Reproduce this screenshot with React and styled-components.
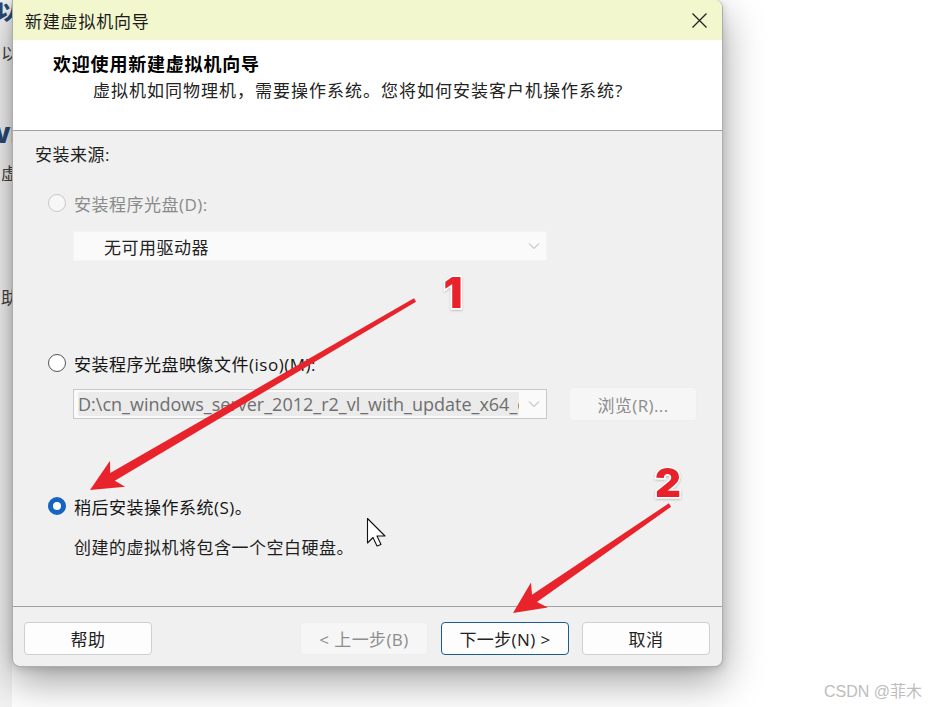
import React from 'react'
import styled, { createGlobalStyle } from 'styled-components'

const GlobalStyle = createGlobalStyle`
  html, body {
    margin: 0;
    padding: 0;
    background: #ffffff;
  }
  * { box-sizing: border-box; }
`;

const font = `"Open Sans", "Noto Sans CJK SC", sans-serif`;

const Page = styled.div`
    position: relative;
    width: 928px;
    height: 707px;
    display: flex;
    align-items: flex-start;
    background: #ffffff;
    overflow: hidden;
    font-family: ${font};
`;

const BackWindow = styled.div`
    width: 12px;
    height: 707px;
    flex-shrink: 0;
    overflow: hidden;
    background: #f3f3f3;
    display: flex;
    flex-direction: column;
    align-items: flex-end;
    color: #333;
    font-size: 17px;
    line-height: 20px;
`;

const BackText = styled.div`
    margin-top: ${p => p.$top}px;
    margin-right: -6px;
    color: ${p => (p.$blue ? '#2a4a73' : '#444')};
    font-weight: ${p => (p.$blue ? 800 : 400)};
    font-size: ${p => (p.$blue ? '22px' : '17px')};
`;

const Dialog = styled.div`
    width: 711px;
    height: 667px;
    flex-shrink: 0;
    display: flex;
    flex-direction: column;
    border: 1px solid rgba(0, 0, 0, 0.28);
    border-top: none;
    border-radius: 0 8px 8px 8px;
    overflow: hidden;
    background: #f0f0f0;
    box-shadow: 0 14px 40px rgba(0, 0, 0, 0.38), 0 2px 8px rgba(0, 0, 0, 0.15);
`;

const TitleBar = styled.div`
    height: 40px;
    display: flex;
    align-items: center;
    justify-content: space-between;
    padding: 0 14px 0 12px;
    background: #f3f7cd;
    font-size: 17px;
    letter-spacing: 0.8px;
    color: #1a1a1a;
`;

const CloseButton = styled.div`
    width: 17px;
    height: 17px;
    display: flex;
    align-items: center;
    justify-content: center;
`;

const Header = styled.div`
    height: 91px;
    background: #ffffff;
    border-bottom: 1px solid #a0a0a0;
    padding: 12px 0 0 40px;
`;

const HeaderTitle = styled.div`
    font-size: 18px;
    line-height: 24px;
    font-weight: 700;
    letter-spacing: 0.8px;
    color: #000;
`;

const HeaderSub = styled.div`
    margin: 3px 0 0 40px;
    font-size: 17px;
    line-height: 24px;
    letter-spacing: 1px;
    color: #222;
`;

const Body = styled.div`
    flex: 1;
    display: flex;
    flex-direction: column;
    padding: 12px 0 0 22px;
    font-size: 17px;
    letter-spacing: 0.5px;
`;

const Label = styled.div`
    line-height: 24px;
    color: #1e1e1e;
    margin-top: ${p => p.$top || 0}px;
    margin-left: ${p => p.$indent || 0}px;
`;

const OptionRow = styled.div`
    display: flex;
    align-items: center;
    gap: 8px;
    height: 24px;
    margin-top: ${p => p.$top}px;
    margin-left: 13px;
    color: ${p => (p.$disabled ? '#8a8a8a' : '#151515')};
`;

const Radio = styled.span`
    width: 18px;
    height: 18px;
    border-radius: 50%;
    flex-shrink: 0;
    background: ${p => (p.$disabled ? '#f7f7f7' : '#ffffff')};
    border: ${p =>
      p.$checked ? '5px solid #1565c0' : p.$disabled ? '1px solid #c8c8c8' : '1px solid #555'};
`;

const FieldRow = styled.div`
    display: flex;
    align-items: center;
    gap: 22px;
    margin-top: ${p => p.$top}px;
    margin-left: 38px;
`;

const Select = styled.div`
    width: 474px;
    height: 30px;
    display: flex;
    align-items: center;
    justify-content: space-between;
    padding: 0 6px 0 ${p => p.$pad}px;
    background: #fafafa;
    border: 1px solid ${p => (p.$bordered ? '#c9c9c9' : '#f4f4f4')};
    color: ${p => (p.$muted ? '#6f6f6f' : '#222')};
    font-size: ${p => (p.$path ? '18px' : '17px')};
    letter-spacing: ${p => (p.$path ? '0' : '0.5px')};
    white-space: nowrap;
    overflow: hidden;
`;

const SelectedText = styled.span`
    background: #ebebeb;
    line-height: 24px;
    overflow: hidden;
    width: 441px;
    flex-shrink: 0;
`;

const Chevron = () => (
  <svg width="12" height="8" viewBox="0 0 12 8" style={{ flexShrink: 0 }}>
    <path d="M1 1.5 L6 6.5 L11 1.5" fill="none" stroke="#a9a9a9" strokeWidth="1" />
  </svg>
);

const Button = styled.div`
    width: 128px;
    height: ${p => (p.$tall ? 34 : 33)}px;
    display: flex;
    align-items: center;
    justify-content: center;
    border-radius: 4px;
    font-size: 17px;
    letter-spacing: 0.4px;
    background: ${p => (p.$disabled ? '#f6f6f6' : '#fdfdfd')};
    color: ${p => (p.$disabled ? '#8d8d8d' : '#222')};
    border: 1px solid ${p => (p.$primary ? '#1b5d8f' : p.$disabled ? '#eeeeee' : '#cfcfcf')};
`;

const Footer = styled.div`
    height: 60px;
    border-top: 1px solid #a0a0a0;
    display: flex;
    align-items: flex-start;
    gap: 13px;
    padding: 15px 12px 0 11px;
`;

const Spacer = styled.div`
    flex: 1;
`;

const Overlay = styled.svg`
    position: absolute;
    left: 0;
    top: 0;
    pointer-events: none;
`;

const Watermark = styled.div`
    position: absolute;
    right: 6px;
    bottom: 5px;
    font-size: 16px;
    color: #bdbdbd;
    font-family: "Liberation Sans", "Noto Sans CJK SC", sans-serif;
`;

const App = () => {
  return (
    <Page>
      <GlobalStyle />
      <BackWindow>
        <BackText $top={0} $blue>以</BackText>
        <BackText $top={24}>以</BackText>
        <BackText $top={60} $blue>VI</BackText>
        <BackText $top={20}>虚</BackText>
        <BackText $top={104}>助</BackText>
      </BackWindow>

      <Dialog>
        <TitleBar>
          <span>新建虚拟机向导</span>
          <CloseButton>
            <svg width="17" height="17" viewBox="0 0 17 17">
              <path d="M1.5 1.5 L15.5 15.5 M15.5 1.5 L1.5 15.5" stroke="#222" strokeWidth="1.3" />
            </svg>
          </CloseButton>
        </TitleBar>

        <Header>
          <HeaderTitle>欢迎使用新建虚拟机向导</HeaderTitle>
          <HeaderSub>虚拟机如同物理机，需要操作系统。您将如何安装客户机操作系统?</HeaderSub>
        </Header>

        <Body>
          <Label>安装来源:</Label>

          <OptionRow $top={24} $disabled>
            <Radio $disabled />
            <span>安装程序光盘(D):</span>
          </OptionRow>
          <FieldRow $top={16}>
            <Select $pad={30}>
              <span>无可用驱动器</span>
              <Chevron />
            </Select>
          </FieldRow>

          <OptionRow $top={90}>
            <Radio />
            <span>安装程序光盘映像文件(iso)(M):</span>
          </OptionRow>
          <FieldRow $top={12}>
            <Select $pad={4} $bordered $muted $path>
              <SelectedText>D:\cn_windows_server_2012_r2_vl_with_update_x64_dvd</SelectedText>
              <Chevron />
            </Select>
            <Button $disabled $tall>浏览(R)...</Button>
          </FieldRow>

          <OptionRow $top={73}>
            <Radio $checked />
            <span>稍后安装操作系统(S)。</span>
          </OptionRow>
          <Label $top={18} $indent={39}>创建的虚拟机将包含一个空白硬盘。</Label>
        </Body>

        <Footer>
          <Button>帮助</Button>
          <Spacer />
          <Button $disabled>&lt; 上一步(B)</Button>
          <Button $primary>下一步(N) &gt;</Button>
          <Button>取消</Button>
        </Footer>
      </Dialog>

      <Overlay width="928" height="707" viewBox="0 0 928 707">
        <defs>
          <filter id="soft" x="-20%" y="-20%" width="140%" height="140%">
            <feDropShadow dx="0" dy="1" stdDeviation="1" floodColor="#000" floodOpacity="0.25" />
          </filter>
        </defs>
        <polygon
          points="90,490 125.2,486.8 114.8,480.8 416,301.7 414,298.3 110.2,473 110,460.8"
          fill="#e8232b"
        />
        <polygon
          points="513,613 547.8,607.4 537,602.1 671.1,506.7 668.9,503.3 532,594.7 531,582.6"
          fill="#e8232b"
        />
        <text
          x="453" y="308" textAnchor="middle" fontSize="42" fontWeight="900"
          fontFamily="Inter, 'DejaVu Sans', sans-serif" fill="#e8232b"
          stroke="#ffffff" strokeWidth="3" paintOrder="stroke" filter="url(#soft)"
        >1</text>
        <text
          x="668" y="497" textAnchor="middle" fontSize="40" fontWeight="900"
          fontFamily="Inter, 'DejaVu Sans', sans-serif" fill="#e8232b"
          stroke="#ffffff" strokeWidth="3" paintOrder="stroke" filter="url(#soft)"
        >2</text>
        <path
          d="M367.5 518.5 L367.5 543 L373 537.5 L377 546 L381 544.5 L377 536 L385 536 Z"
          fill="#ffffff" stroke="#111" strokeWidth="1.1" strokeLinejoin="round"
        />
      </Overlay>

      <Watermark>CSDN @菲木</Watermark>
    </Page>
  )
}

export default App;
